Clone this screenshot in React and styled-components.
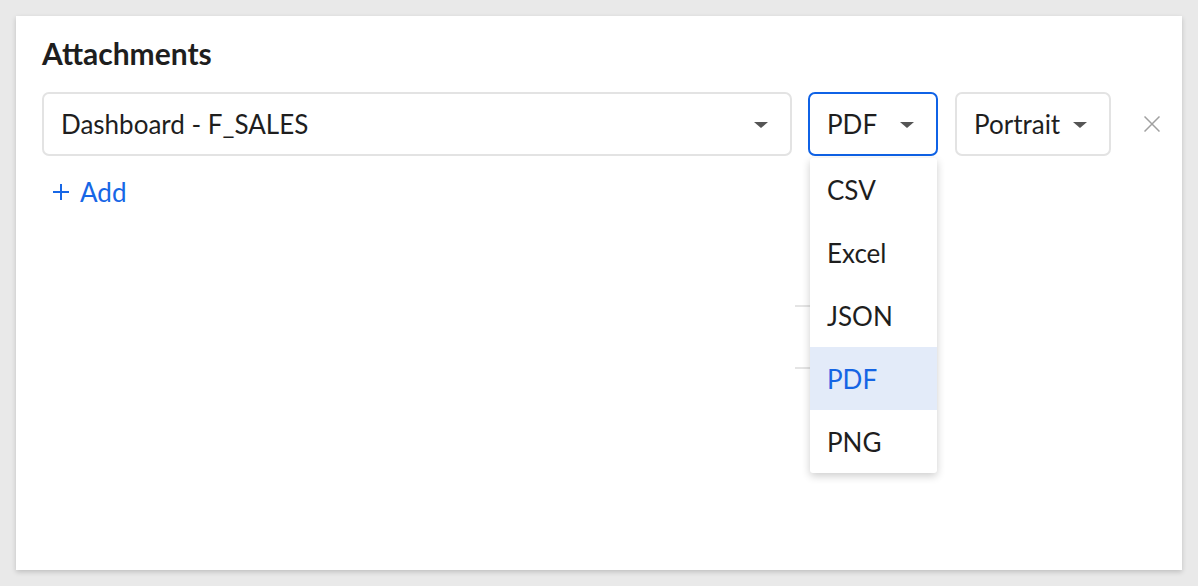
import React from 'react'
import styled, { createGlobalStyle } from 'styled-components'

const GlobalStyle = createGlobalStyle`
    html, body {
        margin: 0;
        padding: 0;
        background: #e9e9e9;
        font-family: Lato, "Noto Sans", sans-serif;
        color: #1e1e1e;
    }
`

const Page = styled.div`
    padding: 16px;
    height: 586px;
    box-sizing: border-box;
`

const Card = styled.div`
    position: relative;
    background: #fff;
    height: 554px;
    box-sizing: border-box;
    padding: 19px 26px 0 26px;
    box-shadow: 0 2px 5px rgba(0, 0, 0, 0.18);
`

const Title = styled.h2`
    margin: 0 0 21px 0;
    font-size: 30px;
    font-weight: 700;
    line-height: 36px;
`

const Row = styled.div`
    display: flex;
    align-items: center;
`

const SelectBox = styled.div`
    flex-shrink: 0;
    display: flex;
    align-items: center;
    justify-content: space-between;
    box-sizing: border-box;
    height: 64px;
    width: ${p => p.$width}px;
    margin-right: ${p => p.$gap || 0}px;
    padding: 0 22px 0 17px;
    border: 2px solid ${p => (p.$focused ? '#0f62e6' : '#e3e3e3')};
    border-radius: 7px;
    font-size: 26px;
`

const Caret = styled.span`
    width: 0;
    height: 0;
    border-left: 7px solid transparent;
    border-right: 7px solid transparent;
    border-top: 6px solid #555;
    margin-top: 2px;
`

const Close = styled.button`
    flex-shrink: 0;
    border: none;
    background: none;
    padding: 0;
    margin-left: 33px;
    width: 16px;
    height: 16px;
    display: flex;
`

const AddLink = styled.a`
    display: inline-flex;
    align-items: center;
    gap: 10px;
    margin-top: 20px;
    margin-left: 10px;
    color: #1767e6;
    font-size: 26px;
    text-decoration: none;
`

const Menu = styled.ul`
    position: absolute;
    left: 794px;
    top: 142px;
    width: 127px;
    margin: 0;
    padding: 0;
    list-style: none;
    background: #fff;
    border-radius: 3px;
    box-shadow: 0 3px 8px rgba(0, 0, 0, 0.2);
    z-index: 2;
`

const MenuItem = styled.li`
    height: 63px;
    display: flex;
    align-items: center;
    padding-left: 17px;
    font-size: 26px;
    color: ${p => (p.$active ? '#1565e4' : '#1e1e1e')};
    background: ${p => (p.$active ? '#e3ebf9' : 'transparent')};
`

const Behind = styled.div`
    position: absolute;
    left: 779px;
    top: 289px;
    width: 40px;
    height: 60px;
    border-top: 2px solid #e4e4e4;
    border-bottom: 2px solid #e4e4e4;
`

const formats = ['CSV', 'Excel', 'JSON', 'PDF', 'PNG']

export default function App() {
    return (
        <Page>
            <GlobalStyle />
            <Card>
                <Title>Attachments</Title>
                <Row>
                    <SelectBox $width={750} $gap={16}>
                        <span>Dashboard - F_SALES</span>
                        <Caret />
                    </SelectBox>
                    <SelectBox $width={130} $gap={17} $focused>
                        <span>PDF</span>
                        <Caret />
                    </SelectBox>
                    <SelectBox $width={156}>
                        <span>Portrait</span>
                        <Caret />
                    </SelectBox>
                    <Close aria-label='remove'>
                        <svg width='16' height='16' viewBox='0 0 16 16'>
                            <path d='M0.5 0.5 L15.5 15.5 M15.5 0.5 L0.5 15.5' stroke='#a0a0a0' strokeWidth='1.5' fill='none' />
                        </svg>
                    </Close>
                </Row>
                <AddLink href='#'>
                    <svg width='18' height='18' viewBox='0 0 18 18'>
                        <path d='M9 1 V17 M1 9 H17' stroke='#1767e6' strokeWidth='2' fill='none' />
                    </svg>
                    Add
                </AddLink>
                <Behind />
                <Menu>
                    {formats.map(f => (
                        <MenuItem key={f} $active={f === 'PDF'}>{f}</MenuItem>
                    ))}
                </Menu>
            </Card>
        </Page>
    )
}
